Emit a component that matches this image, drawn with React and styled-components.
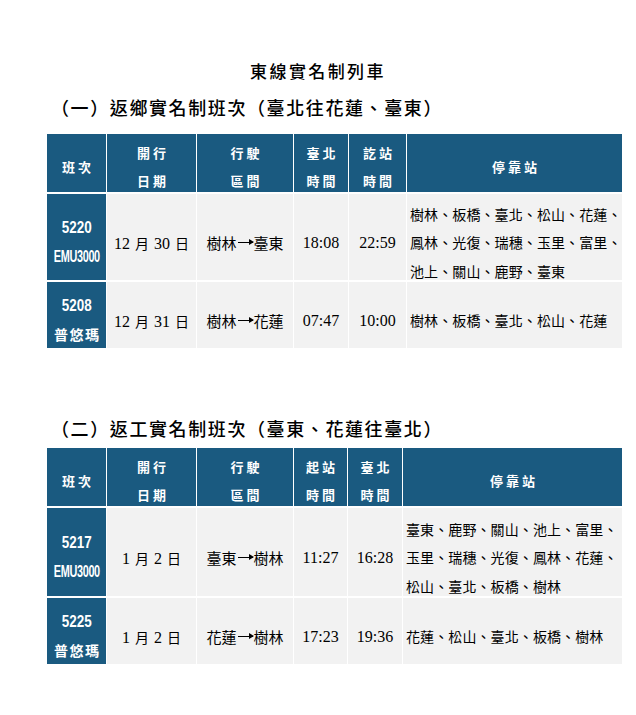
import React from "react";
import styled, { createGlobalStyle } from "styled-components";

const GlobalStyle = createGlobalStyle`
  html, body {
    margin: 0;
    padding: 0;
    background: #ffffff;
  }
  body {
    font-family: "Liberation Serif", "Noto Sans CJK TC", serif;
    color: #000000;
  }
`;

const HEAD_BG = "#1a5a80";
const CELL_BG = "#f2f2f2";

const trips = [
  {
    heading: "（一）返鄉實名制班次（臺北往花蓮、臺東）",
    cols: "59px 89px 96px 54px 57px 215px",
    rows: "58px 86px 66px",
    gap: 14,
    headers: [["班次"], ["開行", "日期"], ["行駛", "區間"], ["臺北", "時間"], ["訖站", "時間"], ["停靠站"]],
    trains: [
      {
        no: "5220",
        type: "EMU3000",
        date: ["12", "月", "30", "日"],
        route: ["樹林", "臺東"],
        dep: "18:08",
        arr: "22:59",
        stops: ["樹林、板橋、臺北、松山、花蓮、", "鳳林、光復、瑞穗、玉里、富里、", "池上、關山、鹿野、臺東"],
      },
      {
        no: "5208",
        type: "普悠瑪",
        date: ["12", "月", "31", "日"],
        route: ["樹林", "花蓮"],
        dep: "07:47",
        arr: "10:00",
        stops: ["樹林、板橋、臺北、松山、花蓮"],
      },
    ],
  },
  {
    heading: "（二）返工實名制班次（臺東、花蓮往臺北）",
    cols: "59px 89px 96px 53px 54px 219px",
    rows: "58px 88px 66px",
    gap: 7,
    headers: [["班次"], ["開行", "日期"], ["行駛", "區間"], ["起站", "時間"], ["臺北", "時間"], ["停靠站"]],
    trains: [
      {
        no: "5217",
        type: "EMU3000",
        date: ["1", "月", "2", "日"],
        route: ["臺東", "樹林"],
        dep: "11:27",
        arr: "16:28",
        stops: ["臺東、鹿野、關山、池上、富里、", "玉里、瑞穗、光復、鳳林、花蓮、", "松山、臺北、板橋、樹林"],
      },
      {
        no: "5225",
        type: "普悠瑪",
        date: ["1", "月", "2", "日"],
        route: ["花蓮", "樹林"],
        dep: "17:23",
        arr: "19:36",
        stops: ["花蓮、松山、臺北、板橋、樹林"],
      },
    ],
  },
];

export default function App() {
  return (
    <>
      <GlobalStyle />
      <Page>
        <Title>東線實名制列車</Title>
        {trips.map((t, i) => (
          <Section key={i} $first={i === 0}>
            <Heading $gap={t.gap}>{t.heading}</Heading>
            <Grid $cols={t.cols} $rows={t.rows}>
              {t.headers.map((h, j) => (
                <HeadCell key={"h" + j}>
                  {h.map((line) => (
                    <span key={line}>{line}</span>
                  ))}
                </HeadCell>
              ))}
              {t.trains.map((tr) => (
                <React.Fragment key={tr.no}>
                  <TrainCell>
                    <TrainNo>{tr.no}</TrainNo>
                    {tr.type === "普悠瑪" ? (
                      <TrainName>{tr.type}</TrainName>
                    ) : (
                      <TrainModel>{tr.type}</TrainModel>
                    )}
                  </TrainCell>
                  <Cell $size={16}>
                    <DatePart>
                      {tr.date.map((p, k) =>
                        k % 2 ? <CjkChar key={k}>{p}</CjkChar> : <span key={k}>{p}</span>
                      )}
                    </DatePart>
                  </Cell>
                  <Cell $size={15} $cjk>
                    {tr.route[0]}
                    <Arrow />
                    {tr.route[1]}
                  </Cell>
                  <Cell $size={16}>{tr.dep}</Cell>
                  <Cell $size={16}>{tr.arr}</Cell>
                  <StopCell>
                    {tr.stops.map((line) => (
                      <span key={line}>{line}</span>
                    ))}
                  </StopCell>
                </React.Fragment>
              ))}
            </Grid>
          </Section>
        ))}
      </Page>
    </>
  );
}

const Page = styled.div`
  width: 636px;
  padding-top: 59px;
  padding-bottom: 40px;
  box-sizing: border-box;
`;

const Title = styled.h1`
  margin: 0;
  text-align: center;
  font-family: "Noto Sans CJK TC", sans-serif;
  font-size: 17px;
  font-weight: 500;
  line-height: 24px;
  letter-spacing: 2.4px;
`;

const Section = styled.section`
  margin-top: ${(p) => (p.$first ? "11px" : "67px")};
`;

const Heading = styled.h2`
  margin: 0 0 ${(p) => p.$gap}px 0;
  padding-left: 51px;
  font-family: "Noto Sans CJK TC", sans-serif;
  font-size: 18px;
  font-weight: 500;
  line-height: 26px;
  letter-spacing: 1.6px;
`;

const Grid = styled.div`
  margin-left: 47px;
  display: grid;
  grid-template-columns: ${(p) => p.$cols};
  grid-template-rows: ${(p) => p.$rows};
  column-gap: 1px;
  row-gap: 2px;
`;

const HeadCell = styled.div`
  background: ${HEAD_BG};
  color: #ffffff;
  display: flex;
  flex-direction: column;
  align-items: center;
  justify-content: center;
  padding-top: 8px;
  font-family: "Noto Sans CJK TC", sans-serif;
  font-size: 13px;
  font-weight: 700;
  line-height: 28px;
  letter-spacing: 3px;

  span {
    padding-left: 3px;
  }
`;

const TrainCell = styled.div`
  background: ${HEAD_BG};
  color: #ffffff;
  display: flex;
  flex-direction: column;
  align-items: center;
  justify-content: center;
  padding-top: 10px;
  line-height: 29px;
`;

const TrainNo = styled.span`
  display: inline-block;
  font-family: "Liberation Sans", sans-serif;
  font-size: 16px;
  font-weight: 700;
  transform: scaleX(0.84);
`;

const TrainModel = styled.span`
  display: inline-block;
  font-family: "Liberation Sans", sans-serif;
  font-size: 16px;
  font-weight: 700;
  letter-spacing: -0.5px;
  transform: scaleX(0.68);
`;

const TrainName = styled.span`
  font-family: "Noto Sans CJK TC", sans-serif;
  font-size: 14px;
  font-weight: 700;
  letter-spacing: 1.5px;
  padding-left: 1.5px;
`;

const Cell = styled.div`
  background: ${CELL_BG};
  display: flex;
  align-items: center;
  justify-content: center;
  padding-top: 11px;
  font-family: ${(p) =>
    p.$cjk ? '"Noto Sans CJK TC", sans-serif' : '"Liberation Serif", "Noto Sans CJK TC", serif'};
  font-size: ${(p) => p.$size}px;
  white-space: nowrap;
`;

const DatePart = styled.span`
  display: flex;
  align-items: baseline;
  gap: 5px;
`;

const CjkChar = styled.span`
  font-family: "Noto Sans CJK TC", sans-serif;
  font-size: 14px;
`;

const Arrow = styled.span`
  display: inline-block;
  position: relative;
  width: 15px;
  height: 1.5px;
  margin: 0 1px;
  background: #000;

  &::after {
    content: "";
    position: absolute;
    right: -1px;
    top: -2.5px;
    border-left: 5px solid #000;
    border-top: 3.25px solid transparent;
    border-bottom: 3.25px solid transparent;
  }
`;

const StopCell = styled.div`
  background: ${CELL_BG};
  display: flex;
  flex-direction: column;
  justify-content: center;
  padding: 11px 0 0 3px;
  font-family: "Noto Sans CJK TC", sans-serif;
  font-size: 14px;
  line-height: 28.5px;
  letter-spacing: 0.1px;
  white-space: nowrap;
`;
